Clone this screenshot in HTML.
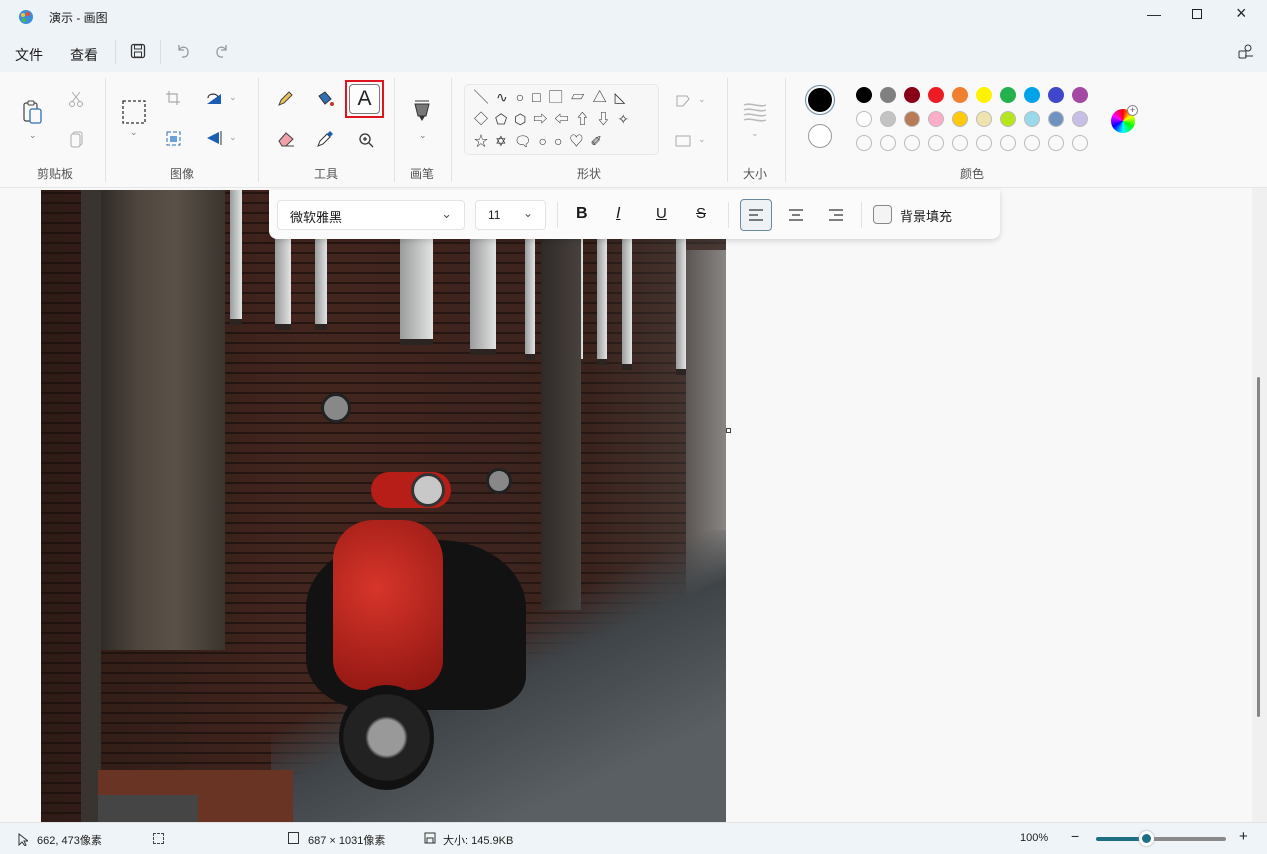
<!DOCTYPE html><html><head><meta charset="utf-8"><style>
*{box-sizing:border-box;margin:0;padding:0}
body{width:1267px;height:854px;overflow:hidden;font-family:"Liberation Sans","Noto Sans CJK SC",sans-serif;font-size:12px;color:#1a1a1a;background:#f9f9f9;position:relative}
.abs{position:absolute}
.top{left:0;top:0;width:1267px;height:72px;background:#eef3f8}
.rib{left:0;top:72px;width:1267px;height:116px;background:#f9f9f9;border-bottom:1px solid #e6e6e6}
.lbl{position:absolute;top:93px;font-size:12px;color:#555}
.sep{position:absolute;top:6px;width:1px;height:104px;background:#e3e3e3}
.dot{position:absolute;width:16px;height:16px;border-radius:50%}
.canvas{left:0;top:188px;width:1267px;height:634px;background:#f8f8f8}
.status{left:0;top:822px;width:1267px;height:32px;background:#eef4f7;border-top:1px solid #e2e2e2;font-size:11px;color:#222}
svg{position:absolute}
.sh{position:absolute;font-size:14px;color:#333;line-height:14px}
.win{position:absolute;top:0;background:linear-gradient(90deg,#9a9c9c,#e2e4e4);border-bottom:6px solid #2c2420}
</style></head><body>
<div class="abs top"></div>
<svg style="left:17px;top:8px" width="18" height="18" viewBox="0 0 18 18"><circle cx="9" cy="9" r="7" fill="#3a8fd6"/><circle cx="6" cy="7" r="2" fill="#f2c23a"/><circle cx="11" cy="6" r="2" fill="#e84b3a"/><circle cx="7" cy="12" r="2" fill="#4cb84c"/></svg>
<div class="abs" style="left:49px;top:9px;font-size:12px">演示 - 画图</div>
<div class="abs" style="left:1147px;top:6px;font-size:14px;color:#222">—</div>
<div class="abs" style="left:1192px;top:9px;width:10px;height:10px;border:1px solid #222"></div>
<div class="abs" style="left:1236px;top:3px;font-size:18px;color:#222">×</div>
<div class="abs" style="left:15px;top:45px;font-size:14px">文件</div>
<div class="abs" style="left:70px;top:45px;font-size:14px">查看</div>
<div class="abs" style="left:115px;top:40px;width:1px;height:24px;background:#ddd"></div>
<svg style="left:130px;top:43px" width="16" height="16" viewBox="0 0 16 16"><rect x="1.5" y="1.5" width="13" height="13" rx="2" fill="none" stroke="#333" stroke-width="1.3"/><rect x="4.5" y="2" width="7" height="4" fill="none" stroke="#333"/><rect x="4.5" y="9" width="7" height="5" fill="none" stroke="#333"/></svg>
<div class="abs" style="left:160px;top:40px;width:1px;height:24px;background:#ddd"></div>
<svg style="left:175px;top:42px" width="16" height="16" viewBox="0 0 16 16"><path d="M4 3v5h5M4 8c2-4 9-4 9 2s-5 5-6 5" fill="none" stroke="#999" stroke-width="1.3"/></svg>
<svg style="left:214px;top:42px" width="16" height="16" viewBox="0 0 16 16"><path d="M12 3v5H7M12 8c-2-4-9-4-9 2s5 5 6 5" fill="none" stroke="#999" stroke-width="1.3"/></svg>
<svg style="left:1237px;top:42px" width="18" height="18" viewBox="0 0 18 18"><circle cx="11" cy="6" r="3" fill="none" stroke="#333"/><rect x="2" y="9" width="7" height="7" rx="1" fill="none" stroke="#333"/><path d="M8 14h8" stroke="#333"/></svg>

<div class="abs rib">
<svg style="left:22px;top:27px" width="22" height="26" viewBox="0 0 22 26"><rect x="2" y="4" width="13" height="18" rx="2" fill="none" stroke="#444" stroke-width="1.2"/><rect x="6" y="2" width="6" height="4" rx="1" fill="#f9f9f9" stroke="#444"/><rect x="8" y="10" width="11" height="14" rx="2" fill="#f9f9f9" stroke="#2f6fb5" stroke-width="1.3"/></svg>
<div class="abs" style="left:29px;top:58px;color:#777;font-size:9px">⌄</div>
<svg style="left:68px;top:18px" width="16" height="18" viewBox="0 0 16 18"><circle cx="4" cy="14" r="2.5" fill="none" stroke="#aaa"/><circle cx="12" cy="14" r="2.5" fill="none" stroke="#aaa"/><path d="M4 2l8 10M12 2L4 12" stroke="#aaa"/></svg>
<svg style="left:70px;top:58px" width="14" height="18" viewBox="0 0 14 18"><rect x="3" y="2" width="9" height="13" rx="2" fill="none" stroke="#aaa"/><rect x="1" y="4" width="9" height="13" rx="2" fill="#f9f9f9" stroke="#aaa"/></svg>
<div class="lbl" style="left:37px">剪贴板</div>
<div class="sep" style="left:105px"></div>
<svg style="left:122px;top:28px" width="24" height="24"><rect x="1" y="1" width="22" height="22" fill="none" stroke="#333" stroke-dasharray="3 2" stroke-width="1.3"/></svg>
<div class="abs" style="left:130px;top:55px;color:#777;font-size:9px">⌄</div>
<svg style="left:165px;top:18px" width="16" height="16"><path d="M4 1v11h11M1 4h11v11" fill="none" stroke="#aaa" stroke-width="1.2"/></svg>
<svg style="left:165px;top:58px" width="17" height="17"><rect x="2" y="2" width="13" height="13" fill="none" stroke="#2f6fb5" stroke-dasharray="4 2"/><rect x="5" y="6" width="7" height="6" fill="#6aa3dc"/></svg>
<svg style="left:205px;top:18px" width="18" height="16"><path d="M2 14h14V4z" fill="#1a5fb4"/><path d="M3 8c0-5 9-5 10-1" fill="none" stroke="#333" stroke-width="1.2"/></svg>
<div class="abs" style="left:229px;top:20px;color:#999;font-size:9px">⌄</div>
<svg style="left:205px;top:58px" width="18" height="16"><path d="M2 8L14 2v12z" fill="#1a5fb4"/><path d="M16 1v14" stroke="#333"/></svg>
<div class="abs" style="left:229px;top:60px;color:#999;font-size:9px">⌄</div>
<div class="lbl" style="left:170px">图像</div>
<div class="sep" style="left:258px"></div>
<svg style="left:276px;top:18px" width="18" height="18"><path d="M3 15l2-5 8-8 3 3-8 8z" fill="#e8c15a" stroke="#444"/></svg>
<svg style="left:316px;top:18px" width="20" height="18"><path d="M3 6l6-4 6 7-6 5z" fill="#2f6fb5" stroke="#333"/><circle cx="16" cy="14" r="2" fill="#c0392b"/></svg>
<div class="abs" style="left:345px;top:8px;width:39px;height:38px;border:2px solid #e0141e"></div>
<div class="abs" style="left:349px;top:12px;width:31px;height:30px;border:1px solid #7a7a7a;border-radius:4px;background:#fdfdfd;font-size:21px;text-align:center;line-height:28px;color:#222">A</div>
<svg style="left:276px;top:58px" width="20" height="18"><path d="M3 11l7-8 7 6-7 7H6z" fill="#f0a0a8" stroke="#444"/><path d="M10 16h8" stroke="#444"/></svg>
<svg style="left:316px;top:58px" width="18" height="18"><path d="M2 16l2-5 7-7 3 3-7 7z" fill="#fff" stroke="#333"/><path d="M11 4l3-3 3 3-3 3z" fill="#1a5fb4"/></svg>
<svg style="left:358px;top:60px" width="16" height="16"><circle cx="7" cy="7" r="5" fill="none" stroke="#333" stroke-width="1.3"/><path d="M11 11l4 4M5 7h4M7 5v4" stroke="#333" stroke-width="1.3"/></svg>
<div class="lbl" style="left:314px">工具</div>
<div class="sep" style="left:394px"></div>
<svg style="left:413px;top:28px" width="18" height="24"><path d="M2 1h14M2 4h14l-3 12H5z" fill="#777" stroke="#333"/><path d="M6 16l3 5 3-5" fill="#333"/></svg>
<div class="abs" style="left:419px;top:58px;color:#777;font-size:9px">⌄</div>
<div class="lbl" style="left:410px">画笔</div>
<div class="sep" style="left:451px"></div>
<div class="abs" style="left:464px;top:12px;width:195px;height:71px;border:1px solid #e8e8e8;border-radius:5px;background:#f7f7f7"></div>
<div class="sh" style="left:474px;top:18px;letter-spacing:8px">╲∿○□▢▱△◺</div>
<div class="sh" style="left:474px;top:40px;letter-spacing:7px">◇⬠⬡⇨⇦⇧⇩✧</div>
<div class="sh" style="left:474px;top:62px;letter-spacing:7px">☆✡🗨○○♡✐</div>
<svg style="left:675px;top:22px" width="16" height="14"><path d="M2 12V2h10l2 3-6 7z" fill="none" stroke="#aaa"/></svg>
<div class="abs" style="left:698px;top:22px;color:#aaa;font-size:9px">⌄</div>
<svg style="left:675px;top:61px" width="16" height="14"><rect x="1" y="3" width="14" height="10" fill="none" stroke="#aaa"/></svg>
<div class="abs" style="left:698px;top:62px;color:#aaa;font-size:9px">⌄</div>
<div class="lbl" style="left:577px">形状</div>
<div class="sep" style="left:727px"></div>
<svg style="left:743px;top:30px" width="24" height="20"><path d="M1 3c6-3 16 3 22 0M1 8c6-3 16 3 22 0M1 13c6-3 16 3 22 0M1 18c6-3 16 3 22 0" fill="none" stroke="#bbb" stroke-width="1.5"/></svg>
<div class="abs" style="left:751px;top:56px;color:#aaa;font-size:9px">⌄</div>
<div class="lbl" style="left:743px">大小</div>
<div class="sep" style="left:785px"></div>
<div class="abs" style="left:805px;top:13px;width:30px;height:30px;border-radius:50%;border:1.5px solid #6b8aa0;padding:2px"><div style="width:100%;height:100%;border-radius:50%;background:#000"></div></div>
<div class="abs" style="left:808px;top:52px;width:24px;height:24px;border-radius:50%;border:1.5px solid #999;background:#fff"></div>
<div id="pal"></div>
<div class="abs" style="left:1111px;top:37px;width:24px;height:24px;border-radius:50%;background:conic-gradient(red,yellow,lime,cyan,blue,magenta,red)"></div>
<div class="abs" style="left:1127px;top:33px;width:11px;height:11px;border-radius:50%;background:#fff;border:1px solid #888;font-size:9px;line-height:9px;text-align:center;color:#555">+</div>
<div class="lbl" style="left:960px">颜色</div>
</div>

<div class="abs canvas"></div>
<div class="abs" style="left:1252px;top:188px;width:15px;height:634px;background:#f0f0f0"></div>
<div class="abs" style="left:1257px;top:377px;width:3px;height:340px;background:#858585;border-radius:2px"></div>

<!-- photo -->
<div class="abs" style="left:41px;top:190px;width:685px;height:632px;overflow:hidden;background:#3b2520">
<div class="abs" style="left:0;top:0;width:685px;height:632px;background:repeating-linear-gradient(0deg,#4a2a22 0 8px,#2a1814 8px 10px),linear-gradient(90deg,#4a2a22,#5a3026)"></div>
<div class="abs" style="left:0;top:0;width:685px;height:632px;background:linear-gradient(90deg,rgba(20,12,10,.5),rgba(0,0,0,.1) 40%,rgba(30,22,20,.35) 80%,rgba(70,70,70,.55))"></div>
<div class="win" style="left:189px;width:12px;height:135px"></div>
<div class="win" style="left:234px;width:16px;height:140px"></div>
<div class="win" style="left:274px;width:12px;height:140px"></div>
<div class="win" style="left:359px;width:33px;height:155px"></div>
<div class="win" style="left:429px;width:26px;height:165px"></div>
<div class="win" style="left:484px;width:10px;height:170px"></div>
<div class="win" style="left:534px;width:8px;height:175px"></div>
<div class="win" style="left:556px;width:10px;height:175px"></div>
<div class="win" style="left:581px;width:10px;height:180px"></div>
<div class="win" style="left:635px;width:10px;height:185px"></div>
<div class="abs" style="left:59px;top:0;width:125px;height:460px;background:linear-gradient(90deg,#2e2a26,#4e463e 30%,#5a5248 60%,#3a342e)"></div>
<div class="abs" style="left:40px;top:0;width:20px;height:632px;background:#3a3430"></div>
<div class="abs" style="left:500px;top:0;width:40px;height:420px;background:linear-gradient(90deg,#2e2a28,#48423e)"></div>
<div class="abs" style="left:645px;top:60px;width:40px;height:400px;background:linear-gradient(90deg,#5a5552,#8a8684)"></div>
<div class="abs" style="left:230px;top:340px;width:455px;height:292px;background:linear-gradient(155deg,rgba(0,0,0,0) 40%,#3f4448 52%,#5a5f63 80%)"></div>
<div class="abs" style="left:57px;top:580px;width:195px;height:52px;background:#6a3424"></div>
<div class="abs" style="left:57px;top:605px;width:100px;height:27px;background:#454545"></div>
<div class="abs" style="left:265px;top:350px;width:220px;height:170px;background:#121212;border-radius:40% 40% 20% 30%"></div>
<div class="abs" style="left:292px;top:330px;width:110px;height:170px;background:radial-gradient(circle at 40% 40%,#d7352a,#8a1410);border-radius:40px 40px 30px 30px"></div>
<div class="abs" style="left:330px;top:282px;width:80px;height:36px;background:#b81e18;border-radius:18px"></div>
<div class="abs" style="left:370px;top:283px;width:34px;height:34px;border-radius:50%;background:#c8c8c8;border:3px solid #333"></div>
<div class="abs" style="left:298px;top:495px;width:95px;height:105px;border-radius:50%;background:radial-gradient(circle,#999 0 25%,#222 30% 60%,#111 62%)"></div>
<div class="abs" style="left:280px;top:203px;width:30px;height:30px;border-radius:50%;background:#888;border:3px solid #222"></div>
<div class="abs" style="left:445px;top:278px;width:26px;height:26px;border-radius:50%;background:#888;border:3px solid #222"></div>
</div>
<div class="abs" style="left:726px;top:428px;width:5px;height:5px;border:1px solid #444;background:#fff"></div>

<!-- text toolbar -->
<div class="abs" style="left:269px;top:190px;width:731px;height:49px;background:#fbfbfb;border-radius:0 0 8px 8px;box-shadow:0 2px 6px rgba(0,0,0,.15)">
<div class="abs" style="left:8px;top:10px;width:188px;height:30px;border:1px solid #e3e3e3;border-radius:4px;background:#fff;padding:6px 12px;font-size:13px">微软雅黑<span style="position:absolute;right:12px;top:5px;color:#555">⌄</span></div>
<div class="abs" style="left:206px;top:10px;width:71px;height:30px;border:1px solid #e3e3e3;border-radius:4px;background:#fff;padding:7px 12px;font-size:12px">11<span style="position:absolute;right:12px;top:5px;color:#555">⌄</span></div>
<div class="abs" style="left:288px;top:12px;width:1px;height:26px;background:#e2e2e2"></div>
<div class="abs" style="left:307px;top:15px;font-size:16px;font-weight:bold">B</div>
<div class="abs" style="left:347px;top:15px;font-size:16px;font-style:italic;text-decoration:underline;text-decoration-thickness:0">I</div>
<div class="abs" style="left:387px;top:15px;font-size:15px;text-decoration:underline">U</div>
<div class="abs" style="left:427px;top:15px;font-size:15px;text-decoration:line-through">S</div>
<div class="abs" style="left:459px;top:12px;width:1px;height:26px;background:#e2e2e2"></div>
<div class="abs" style="left:471px;top:9px;width:32px;height:32px;border:1px solid #6a8aa0;border-radius:4px;background:#eef2f5"></div>
<svg style="left:479px;top:18px" width="16" height="14"><path d="M1 2h14M1 7h9M1 12h14" stroke="#333" stroke-width="1.2"/></svg>
<svg style="left:519px;top:18px" width="16" height="14"><path d="M1 2h14M4 7h8M1 12h14" stroke="#333" stroke-width="1.2"/></svg>
<svg style="left:559px;top:18px" width="16" height="14"><path d="M1 2h14M6 7h9M1 12h14" stroke="#333" stroke-width="1.2"/></svg>
<div class="abs" style="left:592px;top:12px;width:1px;height:26px;background:#e2e2e2"></div>
<div class="abs" style="left:604px;top:15px;width:19px;height:19px;border:1px solid #888;border-radius:4px;background:#f4f4f4"></div>
<div class="abs" style="left:631px;top:16px;font-size:13px">背景填充</div>
</div>

<div class="abs status">
<svg style="left:18px;top:10px" width="10" height="13"><path d="M1 1v11l3-3 3 4 1-1-2-4h4z" fill="none" stroke="#333"/></svg>
<div class="abs" style="left:37px;top:9px">662, 473像素</div>
<div class="abs" style="left:153px;top:10px;width:11px;height:11px;border:1px dashed #444"></div>
<div class="abs" style="left:288px;top:9px;width:11px;height:12px;border:1px solid #333"></div>
<div class="abs" style="left:308px;top:9px">687 × 1031像素</div>
<svg style="left:424px;top:9px" width="12" height="12"><rect x="1" y="1" width="10" height="10" fill="none" stroke="#333"/><rect x="3" y="6" width="6" height="5" fill="none" stroke="#333"/></svg>
<div class="abs" style="left:443px;top:9px">大小: 145.9KB</div>
<div class="abs" style="left:1020px;top:9px">100%</div>
<div class="abs" style="left:1071px;top:5px;font-size:14px">−</div>
<div class="abs" style="left:1096px;top:14px;width:50px;height:4px;background:#1f6f84;border-radius:2px"></div>
<div class="abs" style="left:1146px;top:14px;width:80px;height:4px;background:#8a8a8a;border-radius:2px"></div>
<div class="abs" style="left:1139px;top:8px;width:15px;height:15px;border-radius:50%;background:#fff;box-shadow:0 0 2px #999"><div style="margin:3px;width:9px;height:9px;border-radius:50%;background:#1f6f84"></div></div>
<div class="abs" style="left:1239px;top:5px;font-size:15px">+</div>
</div>
<script>
var c=[["#000","#808080","#880015","#ed1c24","#f08030","#fff200","#22b14c","#00a2e8","#3f48cc","#a349a4"],["#fff","#c3c3c3","#b97a57","#ffaec9","#ffc90e","#efe4b0","#b5e61d","#99d9ea","#7092be","#c8bfe7"]];
var h="";for(var r=0;r<3;r++)for(var i=0;i<10;i++){var col=r<2?c[r][i]:"#fafafa";h+='<div class="dot" style="left:'+(856+i*24)+'px;top:'+(15+r*24)+'px;background:'+col+';'+(r>0?'border:1px solid #bbb':'')+'"></div>';}
document.getElementById("pal").innerHTML=h;
</script>
</body></html>
